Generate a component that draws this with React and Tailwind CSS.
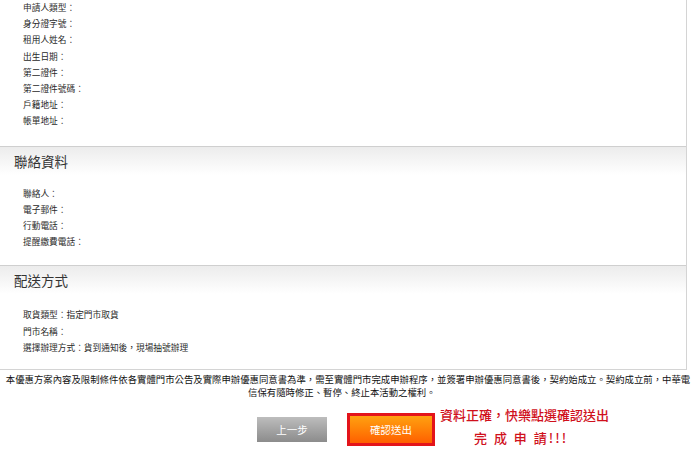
const applicant = [
  '申請人類型：',
  '身分證字號：',
  '租用人姓名：',
  '出生日期：',
  '第二證件：',
  '第二證件號碼：',
  '戶籍地址：',
  '帳單地址：',
]

const contact = ['聯絡人：', '電子郵件：', '行動電話：', '提醒繳費電話：']

const delivery = ['取貨類型：指定門市取貨', '門市名稱：', '選擇辦理方式：貨到通知後，現場抽號辦理']

const font = { fontFamily: '"Noto Sans CJK TC", "Noto Sans", sans-serif' }

const Rows = ({ items, className }) => (
  <div className={`pl-[23px] text-[8.7px] leading-[16.2px] text-[#2a2a2a] ${className}`}>
    {items.map((t) => (
      <div key={t}>{t}</div>
    ))}
  </div>
)

const SectionHeader = ({ title }) => (
  <div className="h-[29px] border-t border-[#cfcfcf] bg-gradient-to-b from-[#ececec] to-white flex items-center pl-[14px] text-[13.5px] text-[#333]">
    {title}
  </div>
)

export default function App() {
  return (
    <div className="w-[696px] h-[460px] bg-white overflow-hidden" style={font}>
      <div className="w-[687px] border-r border-b border-[#d4d4d4]">
        <Rows items={applicant} className="pb-[16px]" />
        <SectionHeader title="聯絡資料" />
        <Rows items={contact} className="pt-[11px] pb-[15px]" />
        <SectionHeader title="配送方式" />
        <Rows items={delivery} className="pt-[13px] pb-[13px]" />
      </div>

      {/* 說明文字 */}
      <div className="mt-[3px] text-[9.4px] leading-[13px] text-[#111] whitespace-nowrap">
        <div className="text-center">
          本優惠方案內容及限制條件依各實體門市公告及實際申辦優惠同意書為準，需至實體門市完成申辦程序，並簽署申辦優惠同意書後，契約始成立。契約成立前，中華電
        </div>
        <div className="pl-[248px]">信保有隨時修正、暫停、終止本活動之權利。</div>
      </div>

      {/* 按鈕 */}
      <div className="flex items-start mt-[14px] pl-[257px]">
        <button className="mt-[4px] w-[70px] h-[25px] bg-gradient-to-b from-[#bdbdbd] to-[#8c8c8c] text-white text-[10.5px]">
          上一步
        </button>
        <button className="ml-[20px] w-[88px] h-[33px] border-[3px] border-[#e3141a] bg-gradient-to-b from-[#ffa010] to-[#ff5e00] text-white text-[10.5px]">
          確認送出
        </button>
        <div className="ml-[5px] -mt-[10px] text-[#d0101c] text-[13px] leading-[23px] font-medium">
          <div>資料正確，快樂點選確認送出</div>
          <div className="pl-[34px] tracking-[2px]">完 成 申 請!!!</div>
        </div>
      </div>
    </div>
  )
}
